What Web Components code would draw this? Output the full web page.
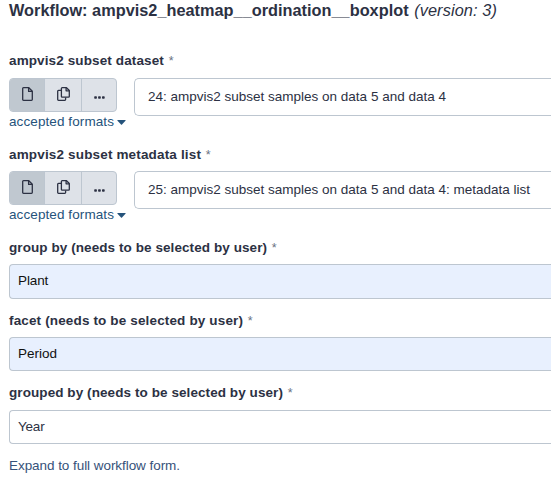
<!DOCTYPE html>
<html lang="en">
<head>
<meta charset="utf-8">
<title>Workflow</title>
<style>
html, body { margin: 0; height: 100%; overflow: hidden; background: #fff; }
body { font: 13.5px/20px "Liberation Sans", Arial, sans-serif; color: #2c3143; }
</style>
</head>
<body>
<workflow-form>
  <workflow-title slot="title" version="(version: 3)">Workflow: ampvis2_heatmap__ordination__boxplot</workflow-title>
  <form-field label="ampvis2 subset dataset" style="--h:93px;--ls:.12px">
    <data-picker>24: ampvis2 subset samples on data 5 and data 4</data-picker>
  </form-field>
  <form-field label="ampvis2 subset metadata list" style="--h:93px;--ls:.16px;--drop:1px">
    <data-picker>25: ampvis2 subset samples on data 5 and data 4: metadata list</data-picker>
  </form-field>
  <form-field label="group by (needs to be selected by user)" style="--h:73px;--ls:.077px;--drop:1px">
    <text-box filled style="--bh:35px;--vs:-.1px">Plant</text-box>
  </form-field>
  <form-field label="facet (needs to be selected by user)" style="--h:73px;--ls:.146px;--drop:1px">
    <text-box filled>Period</text-box>
  </form-field>
  <form-field label="grouped by (needs to be selected by user)" style="--h:73px;--ls:.078px">
    <text-box style="--vs:-.2px;--lh:31px">Year</text-box>
  </form-field>
  <expand-link slot="footer">Expand to full workflow form.</expand-link>
</workflow-form>
<script>
const define = (name, html, setup) => {
  const template = document.createElement('template');
  template.innerHTML = html;
  customElements.define(name, class extends HTMLElement {
    connectedCallback() {
      if (this.shadowRoot) return;
      const root = this.attachShadow({ mode: 'open' });
      root.append(template.content.cloneNode(true));
      if (setup) setup(this, root);
    }
  });
};

define('workflow-form', `
<style>
:host { display: flex; flex-direction: column; padding-left: 9px; }
.fields { display: flex; flex-direction: column; padding-top: 29px; }
</style>
<slot name="title"></slot>
<div class="fields"><slot></slot></div>
<slot name="footer"></slot>`);

define('workflow-title', `
<style>
:host { display: block; height: 22px; white-space: nowrap; }
h1 { margin: 0; font-size: 16.3px; line-height: 21px; font-weight: 700; letter-spacing: .02px; }
i { font-weight: 400; letter-spacing: .12px; margin-left: 1px; }
</style>
<h1><slot></slot> <i></i></h1>`,
  (el, root) => { root.querySelector('i').textContent = el.getAttribute('version'); });

define('form-field', `
<style>
:host { display: flex; flex-direction: column; height: var(--h); gap: 7px; }
.label { box-sizing: border-box; height: 20px; padding-top: var(--drop, 0); line-height: 20px; white-space: nowrap; }
b { letter-spacing: var(--ls); }
small { font-size: 12.5px; line-height: 10px; color: #69717f; margin-left: 1px; }
</style>
<div class="label"><b></b> <small>*</small></div>
<slot></slot>`,
  (el, root) => { root.querySelector('b').textContent = el.getAttribute('label'); });

define('source-buttons', `
<style>
:host { display: flex; box-sizing: border-box; width: 108px; height: 34px; border: 1px solid #bdc6d0; border-radius: 4px; overflow: hidden; background: #dee2e8; }
span { display: flex; align-items: center; justify-content: center; box-sizing: border-box; width: 37px; border-left: 1px solid #bdc6d0; }
.on { width: 34px; border-left: 0; background: #c0c8d0; }
.more { width: 35px; }
svg { display: block; margin-top: -2px; }
.dots { margin-top: 5px; }
</style>
<span class="on"><svg width="11" height="14" viewBox="0 0 11 14" fill="none" stroke="#2c3143" stroke-width="1.3" stroke-linejoin="round"><path d="M1.5.7h5.3l3.5 3.5v8.3q0 .8-.8.8h-8q-.8 0-.8-.8v-11q0-.8.8-.8z"/><path d="M6.6.8v3.6h3.6"/></svg></span>
<span><svg width="13" height="14" viewBox="0 0 13 14" fill="none" stroke="#2c3143" stroke-width="1.3" stroke-linejoin="round"><path d="M5.2.7h4.3l2.8 2.8v5.9q0 .8-.8.8H5.2q-.8 0-.8-.8V1.5q0-.8.8-.8z"/><path d="M9.1.8v3h3.1M4 3.4H1.5q-.8 0-.8.8v8.3q0 .8.8.8h6.3q.8 0 .8-.8v-2"/></svg></span>
<span class="more"><svg class="dots" width="11" height="3" viewBox="0 0 11 3" fill="#2c3143"><rect x=".2" y=".2" width="2.7" height="2.6" rx=".7"/><rect x="4.1" y=".2" width="2.7" height="2.6" rx=".7"/><rect x="8" y=".2" width="2.7" height="2.6" rx=".7"/></svg></span>`);

define('data-picker', `
<style>
:host { display: grid; grid-template-columns: 108px 1fr; column-gap: 17px; align-items: start; }
.formats { display: flex; align-items: center; gap: 3px; height: 20px; width: 118px; color: #25537b; letter-spacing: .09px; white-space: nowrap; }
.formats svg { flex: none; }
.value { box-sizing: border-box; height: 38px; border: 1px solid #bdc6d0; border-right: 0; border-radius: 5px 0 0 5px; padding-left: 13px; line-height: 36px; white-space: nowrap; }
</style>
<div><source-buttons></source-buttons><div class="formats">accepted formats<svg width="9" height="5" viewBox="0 0 9 5"><path d="M.8 0h7.4q.8 0 .3.7L5 4.6q-.5.5-1 0L.5.7Q0 0 .8 0z" fill="#25537b"/></svg></div></div>
<div class="value"><slot></slot></div>`);

define('text-box', `
<style>
:host { display: block; box-sizing: border-box; height: var(--bh, 34px); border: 1px solid #bdc6d0; border-right: 0; border-radius: 4px 0 0 4px; padding-left: 8px; line-height: var(--lh, 32px); letter-spacing: var(--vs, 0); }
:host([filled]) { background: #e8f0fe; color: #101010; }
</style>
<slot></slot>`);

define('expand-link', `
<style>:host { display: block; line-height: 20px; color: #36527a; letter-spacing: -.055px; }</style>
<slot></slot>`);
</script>
</body>
</html>
